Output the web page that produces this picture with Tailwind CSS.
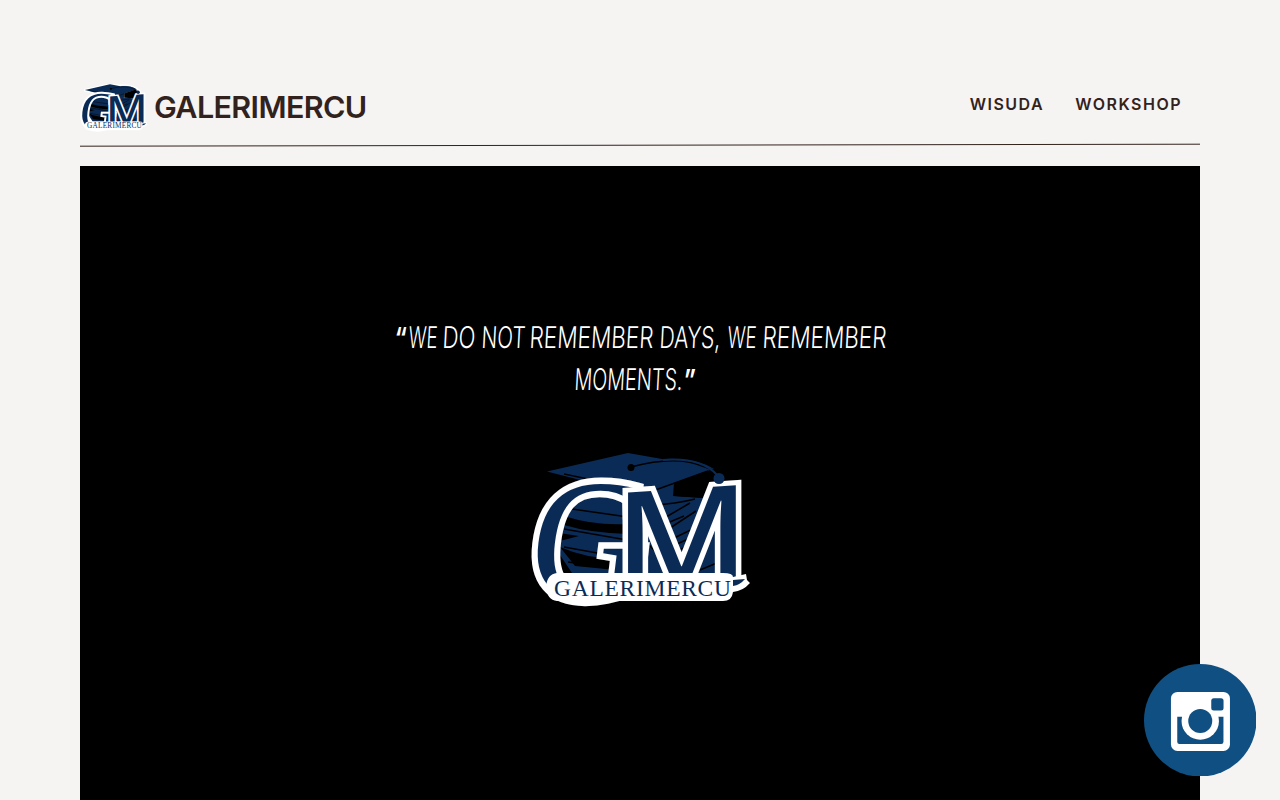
<!DOCTYPE html>
<html lang="id">
<head>
<meta charset="utf-8">
<title>GALERIMERCU</title>
<script src="https://cdn.jsdelivr.net/npm/@tailwindcss/browser@4"></script>
</head>
<body class="h-screen overflow-hidden bg-[#f5f4f2] text-[#32221d]">
<svg class="absolute size-0" aria-hidden="true">
  <defs>
    <g id="cap">
      <path fill="#0b2b57" d="M547 471.500 L628 453 L662 459 Q695 457 714 469 L674 483 L673 496 L704 498 Q696 510 704 522 L724 500 L724 573 H572 L558 552 L562 511 L576 494 L592 483Z"/>
      <g fill="none" stroke="#000" stroke-width="1.500">
        <path d="M564 474 L650 492 L708 471M631 467 Q676 455 702 466 Q713 469 718 475"/>
        <path d="M572 509 L635 518M564 529 L627 540M564 547 L625 558M568 562 L622 570"/>
        <path d="M652 505 Q676 504 695 499M661 520 L690 503M667 530 L696 511M665 524 L684 516M672 539 L699 526M677 544 L697 535M680 550 L704 535M649 545 L680 577M700 570 L724 560"/>
      </g>
      <path fill="#000" d="M564 516 Q595 526 628 524 L628 534 Q590 533 564 525ZM559 533 L579 536 L560 541ZM560 547 Q589 560 626 559 V571 L575 566ZM674 483 L710 470 L720 480 V502 L704 520 Q698 509 704 498 L674 496Z"/>
      <path d="M663 460 Q701 457 717 475" fill="none" stroke="#0b2b57" stroke-width="2"/>
      <circle cx="631" cy="467.500" r="3.500" fill="#000"/>
    </g>
    <g id="mark">
      <g fill="#0b2b57" stroke="#fff" paint-order="stroke" stroke-linejoin="miter" stroke-miterlimit="3">
        <text transform="translate(525 598) skewX(-7) scale(1 1.180)" font-family="'Liberation Serif', serif" font-size="146" stroke-width="11" textLength="117" lengthAdjust="spacingAndGlyphs">G</text>
        <text transform="translate(614 590) skewY(-4)" font-family="'Noto Sans', sans-serif" font-size="135" font-weight="500" stroke-width="10" textLength="136" lengthAdjust="spacingAndGlyphs">M</text>
      </g>
      <circle cx="719" cy="478.500" r="5.500" fill="#0b2b57"/>
      <path fill="#fff" d="M557 573 H723 Q733 573 733 577 L746 574 L747 580 L750 583 Q743 591 733 592 Q732 601 723 601 H612 Q593 609 571 601 H557 Q547 600 546 587 Q547 574 557 573Z"/>
      <path fill="#0b2b57" d="M733 580 L745 579 Q740 585 733 586Z"/>
      <text x="554" y="595.500" font-family="'Liberation Serif', serif" font-size="23.500" fill="#0b2b57" textLength="177" lengthAdjust="spacing">GALERIMERCU</text>
    </g>
  </defs>
</svg>

<main class="mx-20 flex h-full flex-col pt-[84px]">
  <header class="flex h-[48px] shrink-0 items-center">
    <svg class="h-[48px] w-[68px] shrink-0" viewBox="531 452 220 155" preserveAspectRatio="none">
      <path d="M547 472 L628 453 L662 458 Q704 455 724 475 V500 L737 485 V575 L700 590 H560 L536 560 L550 505 L580 480Z" fill="#fff" stroke="#fff" stroke-width="8" stroke-linejoin="round"/>
      <use href="#cap"/><use href="#mark"/>
    </svg>
    <h1 class="ml-[6px] pb-[2px] font-['Inter',sans-serif] text-[30.5px] leading-none font-semibold tracking-[-0.64px]">GALERIMERCU</h1>
    <nav class="mr-[18px] ml-auto flex gap-[31px] pb-[8px] font-['Inter',sans-serif] text-[16px] font-semibold tracking-[1.5px]">
      <a>WISUDA</a><a>WORKSHOP</a>
    </nav>
  </header>
  <svg class="mt-[10px] h-[6px] w-full shrink-0" viewBox="0 0 1120 6"><path d="M0 4.200 L1120 2.200" stroke="#32221d" stroke-width="1"/></svg>
  <section class="mt-[17.600px] flex flex-1 flex-col items-center bg-black pt-[150px]">
    <svg class="h-[88px] w-[560px] shrink-0 overflow-visible" viewBox="360 316 560 88" fill="#fff" font-family="Inter, sans-serif" font-size="30" font-weight="300">
      <g transform="translate(-1 347.500) skewX(-3)">
        <text x="395" y="0" font-weight="600" font-size="29" textLength="12" lengthAdjust="spacingAndGlyphs">“</text>
        <text x="409" textLength="29" lengthAdjust="spacingAndGlyphs">WE</text>
        <text x="443" textLength="33" lengthAdjust="spacingAndGlyphs">DO</text>
        <text x="482" textLength="44" lengthAdjust="spacingAndGlyphs">NOT</text>
        <text x="530" textLength="124" lengthAdjust="spacingAndGlyphs">REMEMBER</text>
        <text x="660" textLength="61" lengthAdjust="spacingAndGlyphs">DAYS,</text>
        <text x="728" textLength="29" lengthAdjust="spacingAndGlyphs">WE</text>
        <text x="763" textLength="124" lengthAdjust="spacingAndGlyphs">REMEMBER</text>
      </g>
      <g transform="translate(0 390) skewX(-3)">
        <text x="574" textLength="108" lengthAdjust="spacingAndGlyphs">MOMENTS.</text>
        <text x="683" y="0" font-weight="600" font-size="29" textLength="12" lengthAdjust="spacingAndGlyphs">”</text>
      </g>
    </svg>
    <svg class="mt-[46px] h-[160px] w-[224px] shrink-0" viewBox="528 450 224 160"><use href="#cap"/><use href="#mark"/></svg>
  </section>
</main>

<a class="absolute right-[24px] bottom-[24px] size-[112.500px]" aria-label="Instagram">
  <svg viewBox="1143.750 663.500 112.500 112.500">
    <circle cx="1200" cy="719.750" r="56.250" fill="#0f4f82"/>
    <rect x="1170.700" y="691.400" width="59" height="59" rx="6.500" fill="#fff"/>
    <path d="M1177 716.200H1223.200V741.200Q1223.200 743.400 1221 743.400H1179.200Q1177 743.400 1177 741.200Z" fill="#0f4f82"/>
    <circle cx="1200" cy="720.500" r="18.700" fill="#fff"/>
    <circle cx="1200" cy="720.500" r="12" fill="#0f4f82"/>
    <rect x="1211" y="697.700" width="12.300" height="12.300" rx="2.500" fill="#0f4f82"/>
  </svg>
</a>
</body>
</html>
